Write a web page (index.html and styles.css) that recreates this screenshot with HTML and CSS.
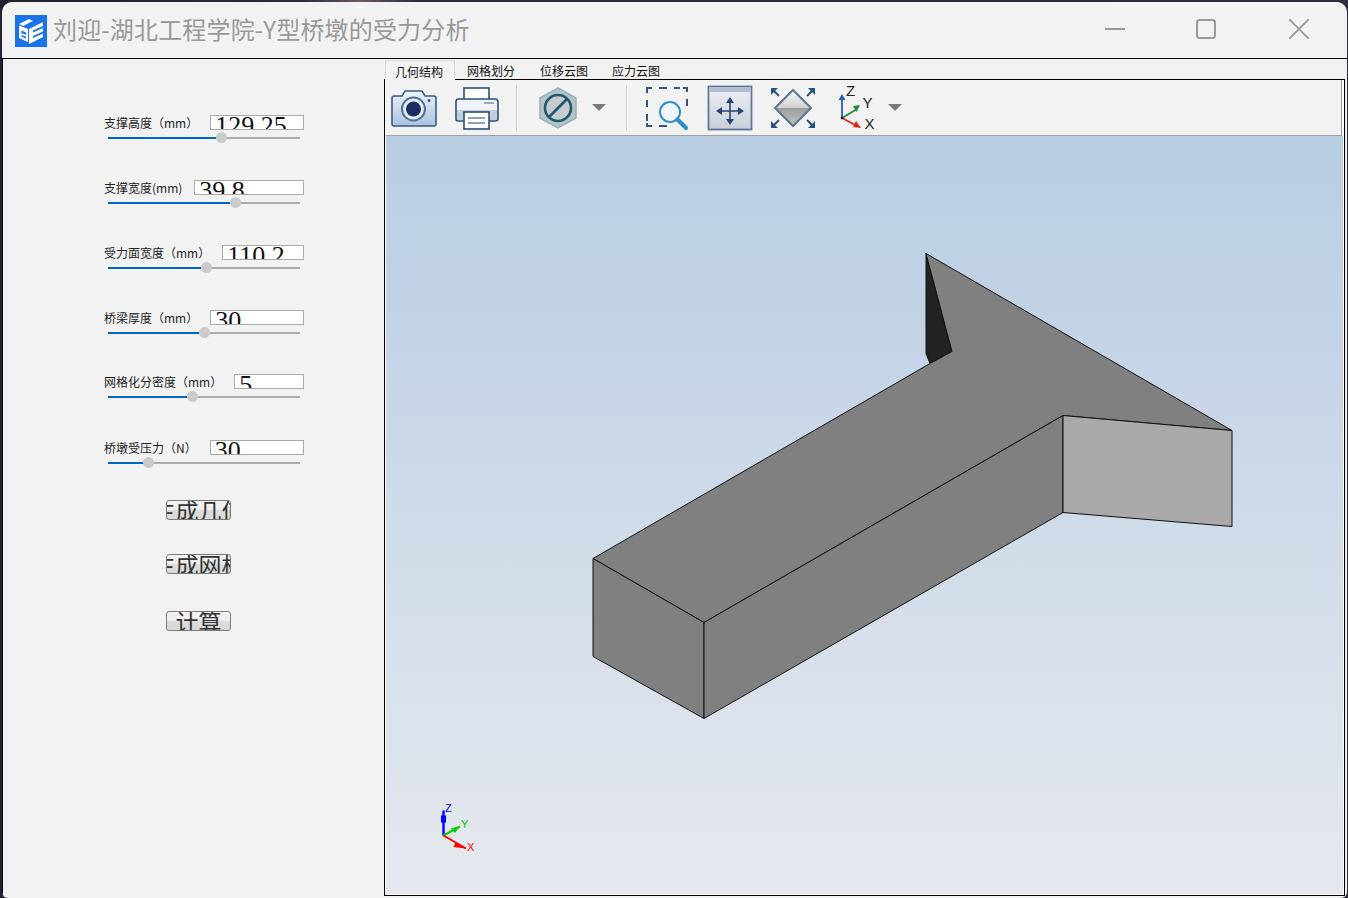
FILE: index.html
```html
<!DOCTYPE html>
<html lang="zh-CN">
<head>
<meta charset="utf-8">
<title>刘迎-湖北工程学院-Y型桥墩的受力分析</title>
<link rel="stylesheet" href="styles.css">
</head>
<body>
<div class="window">
  <header class="titlebar">
    <svg class="logo" viewBox="0 0 32 32">
      <rect width="32" height="32" fill="#1a73e8"/>
      <path d="M4 9 14 4 18 6 8 11Z" fill="#fff"/>
      <path d="M4 10.500 13 14V27L4 23Z" fill="#fff"/>
      <path d="M14 14 28 7V11L18 15.500V17.500L28 13V16.500L18 21V23L28 18.500V22L14 29Z" fill="#fff"/>
      <path d="M6.500 15.500 11 17.500V23.500L6.500 21.500Z" fill="#1a73e8"/>
      <path d="M6.500 19 11 20.800" stroke="#fff" stroke-width="1.500"/>
    </svg>
    <h1 class="title">刘迎-湖北工程学院-Y型桥墩的受力分析</h1>
    <div class="controls">
      <svg class="ctl ctl-min" viewBox="0 0 20 20"><path d="M0 10H20" stroke="#999" stroke-width="2"/></svg>
      <svg class="ctl ctl-max" viewBox="0 0 20 20"><rect x="1" y="1" width="18" height="18" rx="2.500" fill="none" stroke="#999" stroke-width="2"/></svg>
      <svg class="ctl ctl-close" viewBox="0 0 20 20"><path d="M0 0 20 20M20 0 0 20" stroke="#999" stroke-width="1.800"/></svg>
    </div>
  </header>
  <main class="main">
    <aside class="panel">
      <div class="row">
        <div class="field"><span class="label">支撑高度（mm）</span><div class="value">129.25</div></div>
        <div class="slider"><div class="fill" style="width:114px"></div><div class="thumb" style="left:114px"></div></div>
      </div>
      <div class="row">
        <div class="field"><span class="label">支撑宽度(mm)</span><div class="value">39.8</div></div>
        <div class="slider"><div class="fill" style="width:128px"></div><div class="thumb" style="left:128px"></div></div>
      </div>
      <div class="row">
        <div class="field"><span class="label">受力面宽度（mm）</span><div class="value">110.2</div></div>
        <div class="slider"><div class="fill" style="width:99px"></div><div class="thumb" style="left:99px"></div></div>
      </div>
      <div class="row">
        <div class="field"><span class="label">桥梁厚度（mm）</span><div class="value">30</div></div>
        <div class="slider"><div class="fill" style="width:97px"></div><div class="thumb" style="left:97px"></div></div>
      </div>
      <div class="row row-tight">
        <div class="field"><span class="label">网格化分密度（mm）</span><div class="value">5</div></div>
        <div class="slider"><div class="fill" style="width:85px"></div><div class="thumb" style="left:85px"></div></div>
      </div>
      <div class="row row-last">
        <div class="field"><span class="label">桥墩受压力（N）</span><div class="value">30</div></div>
        <div class="slider"><div class="fill" style="width:41px"></div><div class="thumb" style="left:41px"></div></div>
      </div>
      <div class="actions">
        <button class="btn">生成几何</button>
        <button class="btn">生成网格</button>
        <button class="btn">计算</button>
      </div>
    </aside>
    <section class="workspace">
      <nav class="tabs">
        <span class="tab tab-active">几何结构</span>
        <span class="tab">网格划分</span>
        <span class="tab">位移云图</span>
        <span class="tab">应力云图</span>
      </nav>
      <div class="frame">
        <div class="toolbar">
          <svg class="ic ic-camera" viewBox="0 0 46 46">
            <defs><linearGradient id="camg" x1="0" y1="0" x2="0" y2="1"><stop offset="0" stop-color="#eef3fa"/><stop offset="1" stop-color="#a9c2e0"/></linearGradient></defs>
            <path d="M3 11H11L14 6H31L34 11H43Q45 11 45 13V39Q45 41 43 41H3Q1 41 1 39V13Q1 11 3 11Z" fill="url(#camg)" stroke="#3a5a80" stroke-width="1.600"/>
            <circle cx="22.500" cy="24" r="11.500" fill="#e6edf6" stroke="#4f6f96" stroke-width="2"/>
            <circle cx="22.500" cy="24" r="7.500" fill="#1b2f63"/>
            <circle cx="38" cy="15.500" r="1.500" fill="#3a5a80"/>
          </svg>
          <svg class="ic ic-printer" viewBox="0 0 46 46">
            <rect x="10" y="3" width="25" height="14" fill="#fff" stroke="#2f4d75" stroke-width="1.600"/>
            <path d="M4 14H41Q44 14 44 17V34Q44 36 41 36H4Q2 36 2 34V17Q2 14 4 14Z" fill="#eef1f6" stroke="#2f4d75" stroke-width="1.600"/>
            <rect x="3" y="25" width="40" height="10" fill="#c3cedd"/>
            <path d="M30 18H40" stroke="#7f93ad" stroke-width="1.600"/>
            <rect x="10" y="27" width="25" height="17" fill="#fff" stroke="#2f4d75" stroke-width="1.600"/>
            <path d="M14 33H31M14 38H31" stroke="#6c829f" stroke-width="1.500"/>
          </svg>
          <span class="sep sep-a"></span>
          <svg class="ic ic-hex" viewBox="0 0 38 42">
            <path d="M19 1 37 11V31L19 41 1 31V11Z" fill="#b5c4cb" stroke="#93b3bb" stroke-width="1.500"/>
            <circle cx="19" cy="21" r="13" fill="#c6cbcf" stroke="#1f5a6e" stroke-width="2.600"/>
            <path d="M10 30 28 12" stroke="#1f5a6e" stroke-width="2.600"/>
          </svg>
          <span class="caret caret-a"></span>
          <span class="sep sep-b"></span>
          <svg class="ic ic-zoom" viewBox="0 0 44 46">
            <path d="M2 8V3H7M14 3H22M29 3H35M38 3H42V7M42 14V21M2 15V22M2 29V36M2 38V41H7M14 41H22" fill="none" stroke="#35557d" stroke-width="2"/>
            <circle cx="25" cy="27" r="10" fill="#f0f5fa" stroke="#2f8fc8" stroke-width="2"/>
            <path d="M32.500 34.500 41 43" stroke="#2f8fc8" stroke-width="4.200" stroke-linecap="round"/>
          </svg>
          <svg class="ic ic-pan" viewBox="0 0 46 46">
            <defs><linearGradient id="pang" x1="0" y1="0" x2="0" y2="1"><stop offset="0" stop-color="#eceff4"/><stop offset="1" stop-color="#c9cfd9"/></linearGradient></defs>
            <rect x="1.500" y="1.500" width="43" height="43" fill="url(#pang)" stroke="#60779a" stroke-width="1.800"/>
            <rect x="2" y="2" width="42" height="5" fill="#b0bed2"/>
            <path d="M23 14V38M11 26H35" stroke="#2a4670" stroke-width="1.600"/>
            <path d="M23 12 19 18H27ZM23 40 19 34H27ZM9 26 15 22V30ZM37 26 31 22V30Z" fill="#2a4670"/>
          </svg>
          <svg class="ic ic-fit" viewBox="0 0 46 46">
            <defs>
              <linearGradient id="fita" x1="0" y1="0" x2="0" y2="1"><stop offset="0" stop-color="#fafafa"/><stop offset="1" stop-color="#cfcfcf"/></linearGradient>
              <linearGradient id="fitb" x1="0" y1="0" x2="0" y2="1"><stop offset="0" stop-color="#9c9c9c"/><stop offset="1" stop-color="#c4c4c4"/></linearGradient>
            </defs>
            <path d="M23 5 41 23H5Z" fill="url(#fita)"/>
            <path d="M5 23H41L23 41Z" fill="url(#fitb)"/>
            <path d="M23 5 41 23 23 41 5 23Z" fill="none" stroke="#5b7393" stroke-width="2"/>
            <path d="M3 5 9 11M43 5 37 11M3 41 9 35M43 41 37 35" stroke="#28527f" stroke-width="2"/>
            <path d="M1 3H8L1 10ZM45 3H38L45 10ZM1 43H8L1 36ZM45 43H38L45 36Z" fill="#28527f"/>
          </svg>
          <svg class="ic ic-axis" viewBox="0 0 38 46">
            <path d="M4 33V12" stroke="#2a5fb0" stroke-width="1.800"/><path d="M4 9 0.500 15H7.500Z" fill="#2a5fb0"/>
            <path d="M4 33 19 24" stroke="#1b8a3a" stroke-width="1.800"/><path d="M22 20 15 21 18.500 27Z" fill="#1b8a3a"/>
            <path d="M4 33 19 41" stroke="#e02020" stroke-width="1.800"/><path d="M23 43 15 42 18 36Z" fill="#e02020"/>
            <circle cx="4" cy="33" r="1.300" fill="#111"/>
            <text class="axis-label" x="8" y="11">Z</text>
            <text class="axis-label" x="24.500" y="23">Y</text>
            <text class="axis-label" x="26.500" y="43.500">X</text>
          </svg>
          <span class="caret caret-b"></span>
        </div>
        <div class="viewport">
          <svg class="scene" viewBox="386 135.500 957 758">
            <g stroke="#111" stroke-width="1" stroke-linejoin="round">
              <path d="M926 253 952 351 930 363 926 353Z" fill="#222"/>
              <path d="M593 558 704 622 1063 415 1232 430 926 253 952 351 930 363Z" fill="#808080"/>
              <path d="M593 558 704 622V718L593 656Z" fill="#808080"/>
              <path d="M704 622 1063 415V512L704 718Z" fill="#808080"/>
              <path d="M1063 415 1232 430V526L1063 512Z" fill="#a9a9a9"/>
            </g>
            <path d="M443.500 835V810" stroke="#0000ff" stroke-width="2.400"/><path d="M441 815H446V822H441Z" fill="#0000ff"/>
            <path d="M443.500 835 460 826" stroke="#00d000" stroke-width="2"/><path d="M460 825.500 451 828 455 832.500Z" fill="#00d000"/>
            <path d="M443.500 835 466 848" stroke="#ff0000" stroke-width="2"/><path d="M466 848 456 841.500 453.500 846.500Z" fill="#ff0000"/>
            <text class="triad z" x="445" y="811">Z</text>
            <text class="triad y" x="461" y="827">Y</text>
            <text class="triad x" x="467" y="850">X</text>
          </svg>
        </div>
      </div>
    </section>
  </main>
</div>
</body>
</html>
```
FILE: styles.css
```css
* { box-sizing: border-box; }
html, body { margin: 0; height: 100%; overflow: hidden; }
body {
  background: linear-gradient(90deg, #23232f 0, #2b2b3a 300px, #6a5a66 360px, #2b2b3a 420px, #2f2f3e 100%);
  font-family: "Noto Sans CJK SC", "Noto Sans", sans-serif;
  color: #222;
}
.window {
  margin: 2px 0 0 2px;
  width: 1345px;
  height: 896px;
  background: #f2f2f2;
  border-radius: 10px 10px 6px 6px;
  overflow: hidden;
  display: flex;
  flex-direction: column;
}
.titlebar {
  height: 56px;
  flex: none;
  display: flex;
  align-items: center;
  padding-left: 13px;
}
.logo { width: 32px; height: 32px; flex: none; margin-top: 1px; }
.title {
  margin: -3px 0 0 6px;
  font-size: 24px;
  font-weight: 400;
  line-height: 32px;
  letter-spacing: 0.17px;
  color: #999;
  white-space: nowrap;
}
.controls { margin-left: auto; display: flex; align-items: center; padding: 0 38px 2px 0; }
.ctl { width: 20px; height: 20px; display: block; }
.ctl-min { margin-right: 71px; }
.ctl-max { margin-right: 73px; }

.main {
  flex: 1;
  min-height: 0;
  display: flex;
  border-top: 1px solid #000;
  border-left: 1px solid #000;
}
.panel { width: 381px; flex: none; padding: 56px 0 0 101px; }
.row { width: 200px; height: 31px; margin-bottom: 34px; }
.row-tight { margin-top: -1px; margin-bottom: 35px; }
.row-last { margin-bottom: 29px; }
.field { display: flex; align-items: center; height: 15px; }
.label { font-size: 12px; line-height: 13px; margin-bottom: 1px; color: #222; white-space: nowrap; margin-right: 12px; }
.row-last .label { margin-right: 13px; }
.value {
  flex: 1;
  min-width: 0;
  height: 15px;
  background: #fff;
  border: 1px solid #a9a9a9;
  overflow: hidden;
  padding-left: 4px;
  font-family: "Liberation Serif", serif;
  font-size: 26px;
  line-height: 20px;
  color: #111;
  white-space: nowrap;
}
.slider { position: relative; margin: 7px 4px 0; width: 192px; height: 2px; background: #acacac; }
.fill { height: 2px; background: #0067c0; }
.thumb {
  position: absolute;
  top: -5px;
  width: 11px;
  height: 11px;
  margin-left: -6px;
  border-radius: 50%;
  background: #cbcbcb;
}
.actions { display: flex; flex-direction: column; align-items: flex-start; padding-left: 62px; }
.btn {
  width: 65px;
  height: 20px;
  flex: none;
  margin: 0 0 34px;
  padding: 0;
  display: flex;
  justify-content: center;
  align-items: center;
  overflow: hidden;
  border: 1px solid #7a7a7a;
  border-radius: 3px;
  background: linear-gradient(#f2f2f2 0, #ededed 48%, #dcdcdc 52%, #d8d8d8 100%);
  font-family: "Noto Sans CJK SC", sans-serif;
  font-size: 23px;
  line-height: 20px;
  color: #333;
  white-space: nowrap;
}
.btn:nth-child(2) { margin-bottom: 37px; }

.workspace { flex: 1; min-width: 0; display: flex; flex-direction: column; padding-top: 1px; }
.tabs { display: flex; height: 20px; flex: none; margin-bottom: -1px; position: relative; z-index: 1; padding-left: 1px; }
.tab {
  font-size: 12px;
  line-height: 21px;
  height: 19px;
  margin-left: 12px;
  margin-right: 12px;
  white-space: nowrap;
  color: #111;
}
.tab-active {
  height: 20px;
  width: 70px;
  margin: 0;
  padding-left: 9px;
  background: #f2f2f2;
  border: 1px solid #d9d9d9;
  border-bottom: 0;
  line-height: 21px;
}
.tab:nth-child(3) { margin-left: 13px; }
.frame {
  width: 961px;
  height: 817px;
  background: #fff;
  border: 1px solid #000;
  padding: 0 1px 1px;
  display: flex;
  flex-direction: column;
}
.toolbar {
  height: 56px;
  flex: none;
  display: flex;
  align-items: center;
  background: #f2f2f2;
  border-bottom: 1px solid #a0a0a0;
  border-right: 1px solid #9a9a9a;
  margin-right: 1px;
  padding-left: 5px;
}
.ic { display: block; flex: none; height: 46px; }
.ic-camera { width: 46px; }
.ic-printer { width: 46px; margin-left: 17px; }
.sep { width: 1px; height: 46px; background: #d4d4d4; flex: none; }
.sep-a { margin-left: 16px; }
.ic-hex { width: 38px; margin-left: 22px; height: 42px; }
.caret { width: 0; height: 0; flex: none; border-left: 7px solid transparent; border-right: 7px solid transparent; border-top: 7px solid #7a7a7a; }
.caret-a { margin-left: 15px; }
.sep-b { margin-left: 20px; }
.ic-zoom { width: 44px; margin-left: 18px; }
.ic-pan { width: 46px; margin-left: 18px; }
.ic-fit { width: 46px; margin-left: 17px; }
.ic-axis { width: 38px; margin-left: 22px; }
.caret-b { margin-left: 12px; }
.axis-label { font: 15px "Liberation Sans", sans-serif; fill: #222; }

.viewport {
  flex: 1;
  min-height: 0;
  position: relative;
  background: linear-gradient(#b9cde3 0, #c3d3e6 25%, #d6dfea 65%, #e5e8ee 100%);
}
.scene { position: absolute; inset: 0; width: 100%; height: 100%; display: block; }
.triad { font: 11px "Liberation Sans", sans-serif; }
.triad.z { fill: #0000ff; }
.triad.y { fill: #00c000; }
.triad.x { fill: #ff0000; }
```
